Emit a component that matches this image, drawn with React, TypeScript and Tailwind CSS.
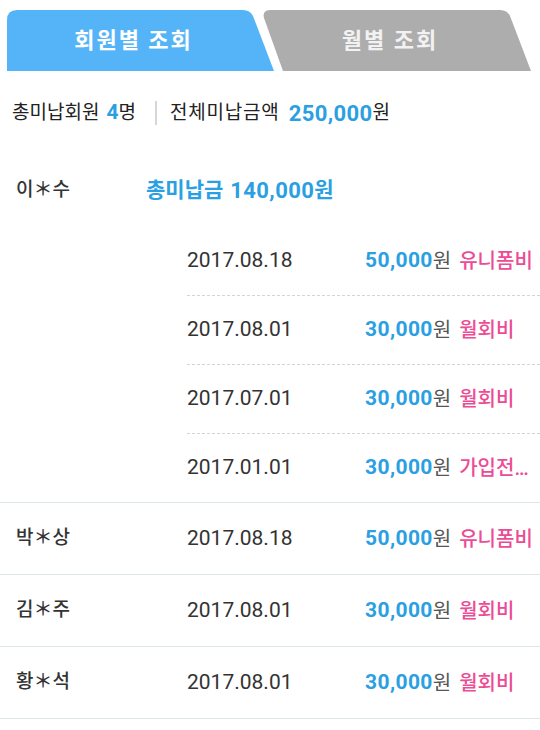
import React from 'react';

type Charge = { date: string; amount: string; type: string };
type Member = { name: string; total?: string; charges: Charge[] };

const members: Member[] = [
  {
    name: '이＊수',
    total: '140,000',
    charges: [
      { date: '2017.08.18', amount: '50,000', type: '유니폼비' },
      { date: '2017.08.01', amount: '30,000', type: '월회비' },
      { date: '2017.07.01', amount: '30,000', type: '월회비' },
      { date: '2017.01.01', amount: '30,000', type: '가입전형비' },
    ],
  },
  { name: '박＊상', charges: [{ date: '2017.08.18', amount: '50,000', type: '유니폼비' }] },
  { name: '김＊주', charges: [{ date: '2017.08.01', amount: '30,000', type: '월회비' }] },
  { name: '황＊석', charges: [{ date: '2017.08.01', amount: '30,000', type: '월회비' }] },
];

function Tabs() {
  return (
    <div className="flex px-[7px] pt-[10px]">
      <button className="relative h-[61px] w-[267px] shrink-0 pr-[14px]">
        <svg className="absolute inset-0" width="267" height="61" viewBox="0 0 267 61">
          <path d="M0 61V10Q0 0 10 0H236Q243 0 246 6L267 61Z" fill="#55b4f8" />
        </svg>
        <span className="relative text-[22px] font-bold tracking-[2px] text-white">회원별 조회</span>
      </button>
      <button className="relative -ml-[12px] h-[61px] w-[269px] shrink-0 pr-[13px]">
        <svg className="absolute inset-0" width="269" height="61" viewBox="0 0 269 61">
          <path d="M21 61L2 8Q0 0 9 0H238Q245 0 248 6L269 61Z" fill="#adadad" />
        </svg>
        <span className="relative text-[22px] font-bold tracking-[2px] text-[#f2f2f2]">월별 조회</span>
      </button>
    </div>
  );
}

function ChargeRow({ c, dashed }: { c: Charge; dashed: boolean }) {
  return (
    <div
      className={
        'flex h-[69px] items-center ' + (dashed ? 'border-t border-dashed border-[#d4d4d4]' : '')
      }
    >
      <span className="w-[178px] shrink-0 text-[21px] text-[#333]">{c.date}</span>
      <span className="text-[21px] font-bold tracking-[0.4px] text-[#2aa0e3]">{c.amount}</span>
      <span className="text-[20px] text-[#555]">원</span>
      <span className="ml-[8px] min-w-0 truncate text-[20px] font-medium text-[#ec4c95]">{c.type}</span>
    </div>
  );
}

export default function App() {
  const [first, ...rest] = members;

  return (
    <div className="min-h-[730px] w-full bg-white" style={{ fontFamily: 'Roboto, "Noto Sans CJK KR", sans-serif' }}>
      <Tabs />

      <div className="flex h-[84px] items-center pl-[12px] text-[19px] text-[#222]">
        <span>총미납회원</span>
        <span className="ml-[7px] text-[21px] font-bold text-[#2aa0e3]">4</span>
        <span>명</span>
        <div className="ml-[19px] mr-[13px] h-[24px] w-[2px] bg-[#d6d6d6]" />
        <span className="tracking-[0.8px]">전체미납금액</span>
        <span className="ml-[9px] text-[22px] font-bold tracking-[0.4px] text-[#2aa0e3]">250,000</span>
        <span>원</span>
      </div>

      {/* first member with several charges */}
      <div className="flex border-b border-[#dde7eb]">
        <div className="flex h-[71px] w-[146px] shrink-0 items-center pl-[16px]">
          <span className="text-[19px] font-medium text-[#333]">{first.name}</span>
        </div>
        <div className="min-w-0 flex-1">
          <div className="flex h-[71px] items-center font-bold text-[#2aa0e3]">
            <span className="text-[21px]">총미납금</span>
            <span className="ml-[7px] text-[22px] tracking-[0.4px]">{first.total}</span>
            <span className="text-[21px]">원</span>
          </div>
          <div className="pl-[41px]">
            {first.charges.map((c, i) => (
              <ChargeRow key={i} c={c} dashed={i > 0} />
            ))}
          </div>
        </div>
      </div>

      {rest.map((m) => (
        <div key={m.name} className="flex h-[72px] items-center border-b border-[#dde7eb]">
          <div className="w-[146px] shrink-0 pl-[16px]">
            <span className="text-[19px] font-medium text-[#333]">{m.name}</span>
          </div>
          <div className="min-w-0 flex-1 pl-[41px]">
            <ChargeRow c={m.charges[0]} dashed={false} />
          </div>
        </div>
      ))}
    </div>
  );
}
